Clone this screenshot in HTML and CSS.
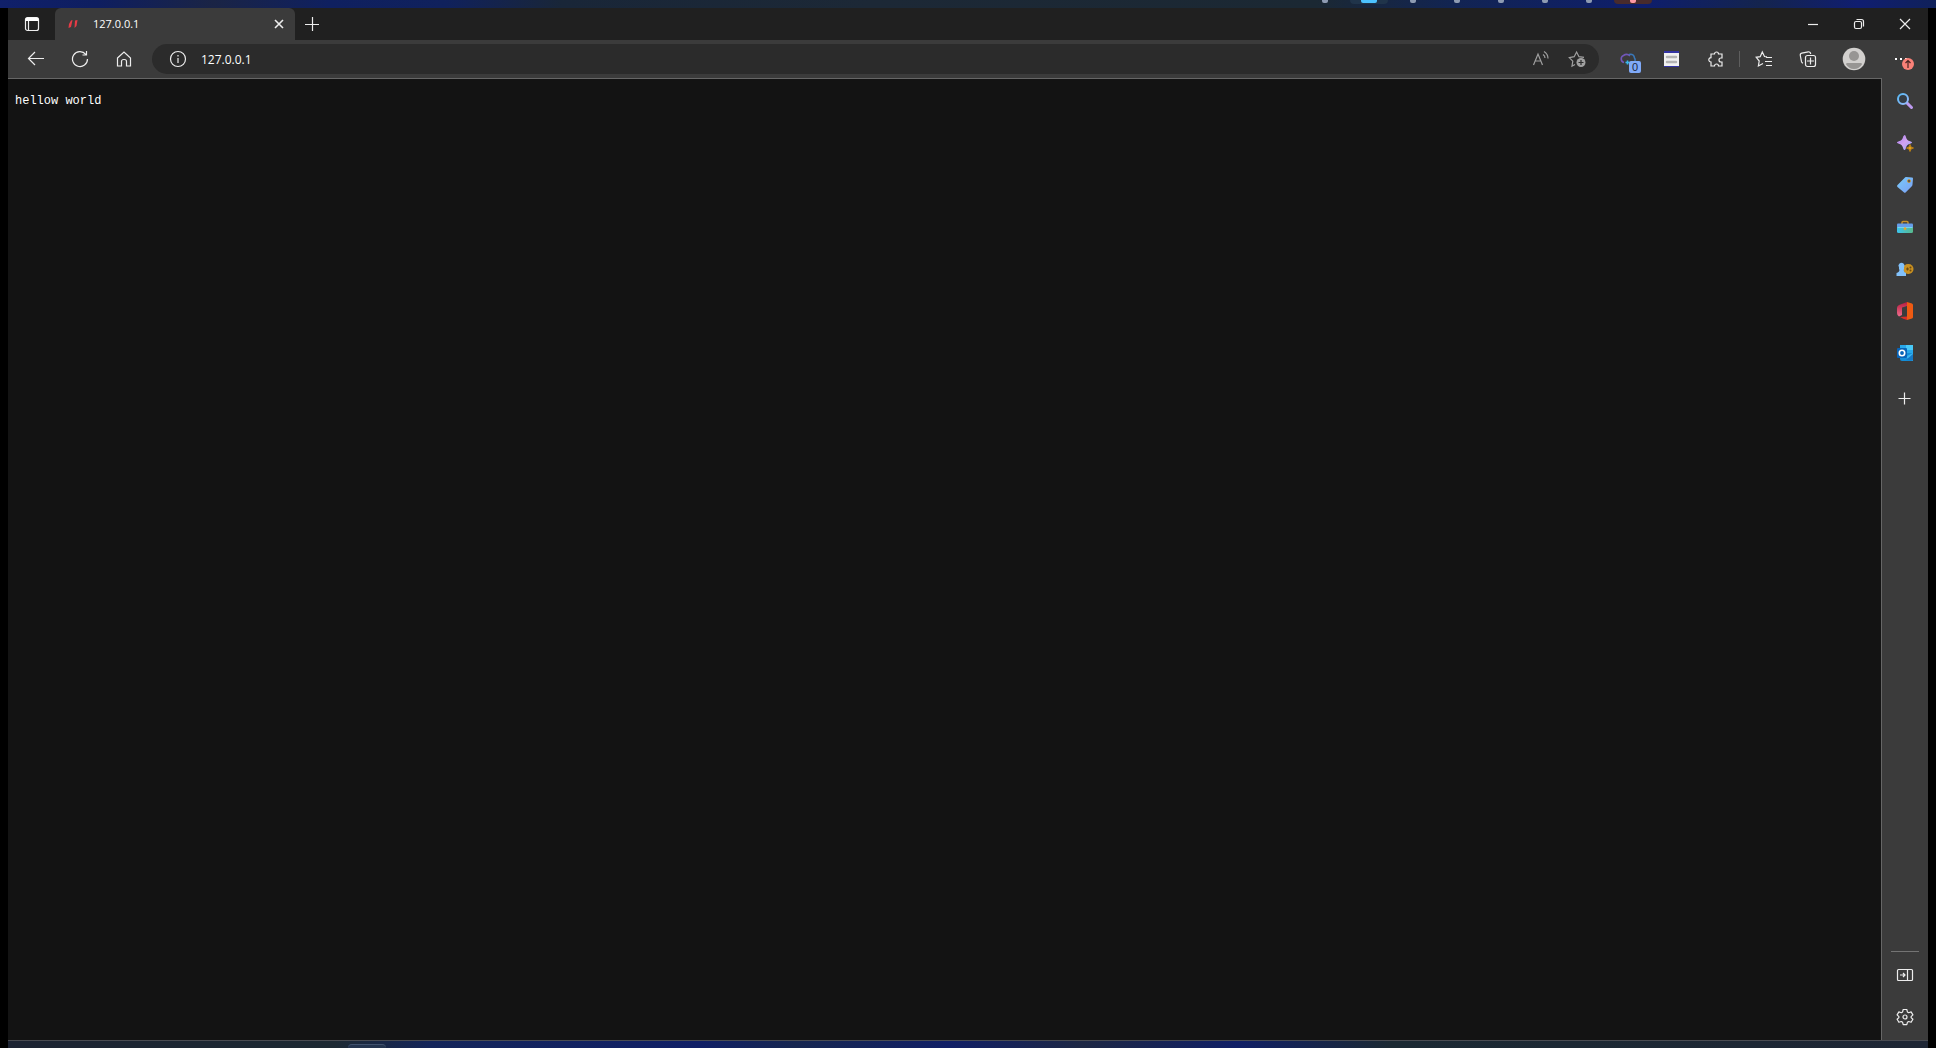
FILE: index.html
```
<!DOCTYPE html>
<html lang="en">
<head>
    <meta charset="UTF-8">
    <meta name="viewport" content="width=device-width, initial-scale=1.0">
    <title>127.0.0.1</title>
    <link rel="stylesheet" href="styles.css">
</head>
<body>
    <div class="taskbar">
        <span class="task"></span>
        <span class="task active"></span>
        <span class="task"></span>
        <span class="task"></span>
        <span class="task"></span>
        <span class="task"></span>
        <span class="task"></span>
        <span class="task alert"></span>
    </div>

    <div class="window">
        <div class="titlebar">
            <button class="tab-menu" aria-label="Tab actions">
                <svg width="16" height="16" viewBox="0 0 16 16"><rect x="1.5" y="1.5" width="13" height="13" rx="2" class="line"/><path d="M1.5 5V3.500a2 2 0 0 1 2-2h9a2 2 0 0 1 2 2V5z" fill="#fff"/><path d="M4.500 5v9.500" class="line"/></svg>
            </button>
            <div class="tab">
                <svg width="16" height="16" viewBox="0 0 16 16"><path d="M6 4.500L7.500 4 6 11l-2.500 1L4 8z" fill="#e63b46"/><path d="M10 4.500l2.500-.5-1 6-2 2z" fill="#e63b46"/></svg>
                <span class="tab-title">127.0.0.1</span>
                <button class="tab-close" aria-label="Close tab">
                    <svg width="16" height="16" viewBox="0 0 16 16"><path d="M4 4l8 8M12 4l-8 8" class="line bold"/></svg>
                </button>
            </div>
            <button class="new-tab" aria-label="New tab">
                <svg width="16" height="16" viewBox="0 0 16 16"><path d="M1 8.500h14M8.500 1v14" class="line"/></svg>
            </button>
            <div class="window-controls">
                <button aria-label="Minimize"><svg width="16" height="16" viewBox="0 0 16 16"><path d="M3 8.500h10" class="line"/></svg></button>
                <button aria-label="Restore"><svg width="16" height="16" viewBox="0 0 16 16"><rect x="3.500" y="5.500" width="7" height="7" rx="1.500" class="line"/><path d="M5.500 3.500h5a2 2 0 0 1 2 2v5" class="line"/></svg></button>
                <button aria-label="Close"><svg width="16" height="16" viewBox="0 0 16 16"><path d="M3 3l10 10M13 3L3 13" class="line"/></svg></button>
            </div>
        </div>

        <div class="toolbar">
            <button aria-label="Back"><svg width="18" height="18" viewBox="0 0 18 18"><path d="M17 8.500H1.500M8 2L1.500 8.500 8 15" class="line"/></svg></button>
            <button aria-label="Refresh"><svg width="18" height="18" viewBox="0 0 18 18"><path d="M16.500 9A7.500 7.500 0 1 1 14.800 4.300M15.500 1v4h-4" class="line"/></svg></button>
            <button aria-label="Home"><svg width="18" height="18" viewBox="0 0 18 18"><path d="M2.500 8L9 2l6.500 6v8h-4v-4.500a2 2 0 0 0-2-2h-1a2 2 0 0 0-2 2V16h-4z" class="line"/></svg></button>
            <div class="address-bar">
                <svg width="18" height="18" viewBox="0 0 18 18"><circle cx="9" cy="9" r="7.500" class="line"/><path d="M9 8v5M9 5v1.500" class="line"/></svg>
                <input type="text" value="127.0.0.1" aria-label="Address">
                <button class="dim" aria-label="Read aloud"><svg width="18" height="18" viewBox="0 0 18 18"><path d="M1.500 15L6 4l4.500 11M3 11h6M11 4.500c1.500 1 2 2 2 3.500M12 1.500c2.500 1.500 4 4 4 7" class="line"/></svg></button>
                <button class="dim" aria-label="Add to favorites"><svg width="18" height="18" viewBox="0 0 18 18"><path d="M7 14.500l-3 1.700.8-5L1.300 7.600 6.200 6.700 8.600 2 11 6.700l5 .7" class="line"/><circle cx="13" cy="12.500" r="4.500" fill="#a0a0a0"/><path d="M13 10v5M10.500 12.500h5" stroke="#2b2b2b" stroke-width="1.200"/></svg></button>
            </div>
            <button class="with-badge" aria-label="Downloads extension, 0 items">
                <svg width="18" height="18" viewBox="0 0 18 18"><path d="M5 12.500A3.700 3.700 0 0 1 4.500 5.500Q8 3 11 6" fill="none" stroke="#7257b8" stroke-width="1.600"/><path d="M10 4.500q5-1 5.500 3.500 1 1 .5 3" fill="none" stroke="#3978b8" stroke-width="1.600"/><path d="M8.500 10.500v4M6.500 12.500h4" stroke="#39b8ef" stroke-width="1.600"/></svg>
                <span class="badge count">0</span>
            </button>
            <button aria-label="List extension"><svg width="18" height="18" viewBox="0 0 18 18"><path d="M1 1h15v16H1z" fill="#3434a4"/><path d="M1 3h15v13H1z" fill="#f2f2f2"/><path d="M4 7h9M4 12h9" stroke="#b4b4b4" stroke-width="2.500" stroke-linecap="round"/></svg></button>
            <button aria-label="Extensions"><svg width="18" height="18" viewBox="0 0 18 18"><path d="M4 4h3.500a2 2 0 1 1 4 0H15v4h-1a1.800 1.800 0 0 0 0 4h1v4h-3.500a2 2 0 0 0-4 0H4v-4a2.200 2.200 0 1 1 0-4.400z" class="line"/></svg></button>
            <span class="divider"></span>
            <button aria-label="Favorites"><svg width="18" height="18" viewBox="0 0 18 18"><path d="M12 6.800L9.500 6.500 7.300 2 5.200 6.700l-4 .6 3 3.700-.8 5L8 13.500M11 7.500h6M10 11.500h7M11 15.500h6" class="line"/></svg></button>
            <button aria-label="Collections"><svg width="18" height="18" viewBox="0 0 18 18"><path d="M4 13.200a2 2 0 0 1-1.500-1.500L1.300 5.500a2 2 0 0 1 1.500-2.300l6.500-1.400A2 2 0 0 1 11.600 3.500v.5" class="line"/><rect x="6.500" y="5.500" width="10" height="11" rx="2" class="line"/><path d="M11.500 7.500v7M8 11h7" class="line"/></svg></button>
            <button class="profile" aria-label="Profile"><svg width="24" height="24" viewBox="0 0 24 24"><circle cx="12" cy="12" r="11.300" fill="#d2d0ce"/><circle cx="12" cy="9" r="5" fill="#979593"/><path d="M4 17.200q0-1.200 1.500-1.200h13q1.500 0 1.500 1.200A9.800 9.800 0 0 1 12 22a9.800 9.800 0 0 1-8-4.800z" fill="#979593"/></svg></button>
            <button class="more with-badge" aria-label="Settings and more">
                <svg width="18" height="18" viewBox="0 0 18 18"><path d="M3 8h2v2H3zM8 8h2v2H8zM13 8h2v2h-2z" fill="#fff"/></svg>
                <span class="badge update"><svg width="12" height="12" viewBox="0 0 12 12"><path d="M6 10V2.500M3.500 5L6 2.500 8.500 5" fill="none" stroke="#4a2522" stroke-width="1.200"/></svg></span>
            </button>
        </div>

        <div class="content">
            <main class="page">
                <pre>hellow world</pre>
            </main>
            <aside class="sidebar">
                <button aria-label="Search"><svg width="18" height="18" viewBox="0 0 18 18">
                    <defs><linearGradient id="lens" x1="0" y1="0" x2="1" y2="1"><stop stop-color="#58baf6"/><stop offset="1" stop-color="#97b9fa"/></linearGradient></defs>
                    <path d="M11 11l4.500 4.500" stroke="#bd9af0" stroke-width="3" stroke-linecap="round"/><circle cx="7" cy="7" r="5" fill="#343d46" stroke="url(#lens)" stroke-width="2"/></svg></button>
                <button aria-label="Discover"><svg width="18" height="18" viewBox="0 0 18 18">
                    <defs><linearGradient id="spark" x1="0" y1="0" x2="1" y2="1"><stop stop-color="#a57bf0"/><stop offset=".5" stop-color="#d2a3f0"/><stop offset="1" stop-color="#8fa5fa"/></linearGradient></defs>
                    <path d="M8.500 1q.8 0 1.200 1.300C10.500 5.500 11.500 6.500 14.700 7.500 16.500 8 16.500 9 14.700 9.500 11.500 10.500 10.500 11.500 9.700 14.700 9.200 16.500 7.800 16.500 7.300 14.700 6.500 11.500 5.500 10.500 2.300 9.500.5 9 .5 8 2.300 7.500 5.500 6.500 6.500 5.500 7.300 2.300 7.700 1 8.500 1z" fill="url(#spark)"/><path d="M14 10.500l1 2.500 2.500 1-2.500 1-1 2.500-1-2.500-2.500-1 2.500-1z" fill="#e0a01c" stroke="#b67d16"/></svg></button>
                <button aria-label="Shopping"><svg width="18" height="18" viewBox="0 0 18 18">
                    <defs><linearGradient id="tag" x1="0" y1="0" x2="1" y2="1"><stop stop-color="#78ccfa"/><stop offset="1" stop-color="#7c9ff4"/></linearGradient></defs>
                    <path d="M10 1l6 .5q1 0 1 1l-.5 6q0 1-.7 1.700l-6 6q-1 1-2 0L1.500 11q-1-1 0-2L8.500 2q.7-1 1.500-1z" fill="url(#tag)"/><circle cx="13" cy="5" r="1.500" fill="#3d4148" stroke="#c59a48"/></svg></button>
                <button aria-label="Tools"><svg width="18" height="18" viewBox="0 0 18 18">
                    <defs><linearGradient id="box"><stop stop-color="#3cc4ed"/><stop offset="1" stop-color="#59b98c"/></linearGradient></defs>
                    <path d="M6 6V4.500q0-1 1-1h4q1 0 1 1V6" fill="none" stroke="#c89129" stroke-width="1.500"/><rect x="1" y="8" width="16" height="7" rx="1.500" fill="url(#box)"/><rect x="1" y="5.500" width="16" height="4" rx="1" fill="#669de8"/><path d="M1.500 9.500h15" stroke="#74d6f1"/><path d="M9 9l1.700 1.500L9 12.500l-1.700-2z" fill="#e4a72b"/></svg></button>
                <button aria-label="Games"><svg width="18" height="18" viewBox="0 0 18 18"><rect x="7" y="4" width="10.500" height="10" rx="5" fill="#c99020"/><path d="M10 9h3M11.500 7.500v3" stroke="#6c4a13" stroke-width="1.200"/><circle cx="14.500" cy="7.500" r="1" fill="#6c4a13"/><circle cx="14.500" cy="10.500" r="1" fill="#6c4a13"/><path d="M3 7.500a3 3 0 1 1 5 0v2H7.500q0 2.500 2.500 3.500v3H.5v-3Q3.500 12 3.500 9.500H3z" fill="#82c1fa"/></svg></button>
                <button aria-label="Office"><svg width="18" height="20" viewBox="0 0 18 20">
                    <defs><linearGradient id="office" x1="0" y1="0" x2="0" y2="1"><stop stop-color="#b51c3d"/><stop offset="1" stop-color="#f06e8f"/></linearGradient></defs>
                    <path d="M11 1v4L6 6.500v7.500l-3 1.500q-2-1-2-3.500V7q0-2 2-3z" fill="url(#office)"/><path d="M11 1l5 1.500q1 .5 1 1.500v12q0 1-1 1.500L11 19z" fill="#ee5a12"/><path d="M4 16l7-.5V19q-4-1-7-3z" fill="#d92d28"/></svg></button>
                <button aria-label="Outlook"><svg width="18" height="18" viewBox="0 0 18 18"><path d="M4 1h13v8H4z" fill="#28a8ea"/><path d="M10 1h7v5h-7z" fill="#48c9f8"/><path d="M4 9h13v8H6q-2 0-2-2z" fill="#138dd8"/><path d="M17 9v8l-8-4z" fill="#36b3ee"/><path d="M10 16l7-6v6.500z" fill="#1678c4"/><rect x="1" y="4" width="10" height="10" rx="1" fill="#0864b8"/><circle cx="6" cy="9" r="2.700" fill="none" stroke="#fff" stroke-width="1.600"/></svg></button>
                <button class="add" aria-label="Customize"><svg width="16" height="16" viewBox="0 0 16 16"><path d="M1.500 8.500h12M7.500 2.500v12" class="line"/></svg></button>
                <div class="sidebar-bottom">
                    <button aria-label="Hide sidebar"><svg width="18" height="18" viewBox="0 0 18 18"><rect x="1.500" y="3.500" width="15" height="11" rx="1" class="line"/><path d="M11.500 3.500v11M4 9h5M7 7l2 2-2 2" class="line"/></svg></button>
                    <button aria-label="Settings"><svg width="18" height="18" viewBox="0 0 18 18"><path d="M7.200 1.500h3.600l.6 2.400 1.300.8 2.400-.8 1.800 3-1.800 1.700v1l1.800 1.700-1.800 3-2.400-.8-1.300.8-.6 2.400H7.200l-.6-2.400-1.300-.8-2.400.8-1.800-3 1.800-1.700v-1L1.100 6.900l1.800-3 2.400.8 1.300-.8z" class="line" stroke-linejoin="round"/><circle cx="9" cy="9" r="2" class="line"/></svg></button>
                </div>
            </aside>
        </div>
    </div>

    <div class="desktop-edge"><span class="edge-tile"></span></div>
</body>
</html>
```
FILE: styles.css
```
* {
    box-sizing: border-box;
}

body {
    margin: 0;
    height: 100vh;
    display: flex;
    flex-direction: column;
    background-color: #000;
    color: #fff;
    font-family: "Open Sans", "Noto Sans", sans-serif;
    font-size: 12px;
    overflow: hidden;
}

button {
    display: flex;
    align-items: center;
    justify-content: center;
    flex-shrink: 0;
    padding: 0;
    border: none;
    background: none;
    color: inherit;
}

svg {
    display: block;
    flex-shrink: 0;
}

.line {
    fill: none;
    stroke: #ededed;
    stroke-width: 1.2;
}

.bold {
    stroke-width: 1.6;
}

.dim .line {
    stroke: #a0a0a0;
}

/* strip above the window */
.taskbar {
    display: flex;
    justify-content: flex-end;
    flex-shrink: 0;
    height: 8px;
    padding-right: 281px;
    background: linear-gradient(90deg, #10206a 0%, #0e1e60 5%, #1a2445 11%, #0f2060 17%, #10215c 23%, #192638 29%, #1c2836 45%, #1b2833 68%, #122452 75%, #0e1e6c 85%, #14244e 91%, #101e70 96%, #10215a 100%);
}

.task {
    display: flex;
    justify-content: center;
    width: 44px;
    padding: 0 3px;
}

.task::before {
    content: "";
    width: 6px;
    height: 3px;
    border-radius: 0 0 2px 2px;
    background-color: #8e9bb2;
}

.task.active::before {
    width: 16px;
    background-color: #4cc2ff;
}

.task.alert::before {
    background-color: #ff99a4;
}

.task.active,
.task.alert {
    height: 4px;
    margin: 0 3px;
    width: 38px;
    border-radius: 0 0 4px 4px;
    background-color: #20344a;
}

.task.alert {
    background-color: #482b2c;
}

.window {
    display: flex;
    flex-direction: column;
    flex: 1;
    min-height: 0;
    margin: 0 8px;
    background-color: #3b3b3b;
    border-bottom: 1px solid #4a4c52;
}

.titlebar {
    display: flex;
    height: 32px;
    background-color: #202020;
}

.tab-menu {
    width: 47px;
}

.tab {
    display: flex;
    align-items: center;
    width: 240px;
    padding: 0 8px 0 10px;
    background-color: #3b3b3b;
    border-radius: 6px 6px 0 0;
}

.tab-title {
    flex: 1;
    margin-left: 12px;
    font-size: 11px;
    line-height: 16px;
}

.new-tab {
    width: 34px;
}

.window-controls {
    display: flex;
    margin-left: auto;
}

.window-controls button {
    width: 46px;
}

.toolbar {
    display: flex;
    align-items: center;
    height: 38px;
    padding-left: 6px;
}

.toolbar > button {
    width: 44px;
    height: 30px;
}

.address-bar {
    display: flex;
    align-items: center;
    flex: 1;
    height: 30px;
    margin: 0 7px 0 6px;
    padding: 0 4px 0 17px;
    border-radius: 15px;
    background-color: #2b2b2b;
}

.address-bar input {
    flex: 1;
    min-width: 0;
    margin-left: 14px;
    padding: 0;
    border: none;
    outline: none;
    background: none;
    color: #fff;
    font-family: inherit;
    font-size: 12px;
}

.address-bar button {
    width: 36px;
}

.with-badge {
    position: relative;
}

.badge {
    position: absolute;
    display: flex;
    align-items: center;
    justify-content: center;
}

.count {
    left: 23px;
    top: 17px;
    width: 12px;
    height: 12px;
    border-radius: 2px;
    background-color: #80aaf8;
    color: #1a2742;
    font-size: 11px;
    line-height: 12px;
}

.update {
    left: 20px;
    top: 14px;
    width: 12px;
    height: 12px;
    border-radius: 50%;
    background-color: #fa8178;
}

.divider {
    width: 1px;
    height: 16px;
    margin: 0 2px 0 1px;
    background-color: #5e5e5e;
}

.toolbar > .profile {
    width: 48px;
}

.toolbar > .more {
    width: 46px;
    margin-left: 4px;
    padding-right: 8px;
}

.content {
    display: flex;
    flex: 1;
    min-height: 0;
}

.page {
    flex: 1;
    padding: 8px 7px;
    background-color: #131313;
    border-top: 1px solid #666;
    border-right: 1px solid #666;
}

.page pre {
    margin: 6px 0;
    font-family: "Liberation Mono", monospace;
    font-size: 12px;
    line-height: 16px;
}

.sidebar {
    display: flex;
    flex-direction: column;
    width: 46px;
    padding-top: 2px;
}

.sidebar button {
    width: 46px;
    height: 42px;
}

.sidebar .add {
    margin-top: 3px;
}

.sidebar-bottom {
    margin-top: auto;
    padding-bottom: 2px;
}

.sidebar-bottom::before {
    content: "";
    display: block;
    height: 1px;
    margin: 0 9px 2px;
    background-color: #747474;
}

/* strip below the window */
.desktop-edge {
    display: flex;
    flex-shrink: 0;
    height: 7px;
    margin: 0 8px;
    background: linear-gradient(90deg, #1d2433 0%, #1d2933 17%, #14255a 22%, #101f66 36%, #162650 41%, #111f66 49%, #1d2744 56%, #101f66 64%, #1b2933 72%, #1e2635 100%);
}

.edge-tile {
    width: 38px;
    height: 4px;
    margin: 3px 0 0 340px;
    border-top: 1px solid #41526e;
    border-radius: 4px 4px 0 0;
    background-color: #24344f;
}
```
